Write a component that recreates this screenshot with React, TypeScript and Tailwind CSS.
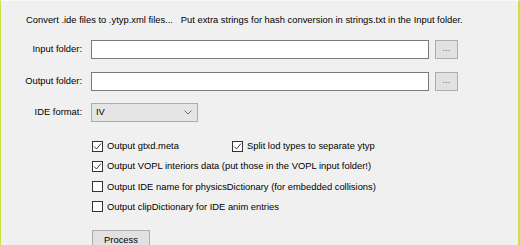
import React from "react";

const Check = ({ checked }: { checked?: boolean }) => (
  <span className="flex h-[11px] w-[11px] shrink-0 items-center justify-center border border-[#333333] bg-white">
    {checked && (
      <svg width="9" height="9" viewBox="0 0 9 9">
        <path d="M1 4.5 L3.5 7 L8 1.5" fill="none" stroke="#3a3a3a" strokeWidth="1" />
      </svg>
    )}
  </span>
);

const Option = ({ label, checked }: { label: string; checked?: boolean }) => (
  <label className="flex items-center gap-[4px] leading-[12px]">
    <Check checked={checked} />
    <span>{label}</span>
  </label>
);

const FolderRow = ({ label }: { label: string }) => (
  <div className="flex items-center">
    <span className="w-[81px] text-right">{label}</span>
    <div className="ml-[9px] h-[19px] w-[338px] border border-[#7a7a7a] bg-white" />
    <button className="ml-[6px] flex h-[19px] w-[23px] items-center justify-center border border-[#adadad] bg-[#e1e1e1] pb-[2px] text-[#666]">
      ...
    </button>
  </div>
);

export default function App() {
  return (
    <div
      className="flex h-[245px] w-[520px] flex-col overflow-hidden border-t border-r-2 border-l border-t-white border-dotted border-r-[#c8e43c] border-l-[#c8e43c] bg-[#f0f0f0] text-[9.4px] text-black"
      style={{ fontFamily: '"Liberation Sans", Arial, sans-serif', borderRightStyle: "solid", borderLeftStyle: "solid" }}
    >
      <p className="mt-[13px] pl-[25px] leading-[12px]">
        Convert .ide files to .ytyp.xml files...&nbsp;&nbsp;&nbsp;Put extra strings for hash conversion in strings.txt in the Input folder.
      </p>

      <div className="mt-[14px] flex flex-col gap-[13px]">
        <FolderRow label="Input folder:" />
        <FolderRow label="Output folder:" />
      </div>

      <div className="mt-[12px] flex items-center">
        <span className="w-[81px] text-right">IDE format:</span>
        <div className="ml-[9px] flex h-[19px] w-[107px] items-center justify-between border border-[#acacac] bg-[#e5e5e5] pl-[4px] pr-[5px]">
          <span>IV</span>
          <svg width="8" height="5" viewBox="0 0 8 5">
            <path d="M0.5 0.5 L4 4 L7.5 0.5" fill="none" stroke="#707070" strokeWidth="1" />
          </svg>
        </div>
      </div>

      <div className="mt-[18px] ml-[91px] flex flex-col gap-[8.3px]">
        <div className="flex">
          <div className="w-[140px]">
            <Option label="Output gtxd.meta" checked />
          </div>
          <Option label="Split lod types to separate ytyp" checked />
        </div>
        <Option label="Output VOPL interiors data (put those in the VOPL input folder!)" checked />
        <Option label="Output IDE name for physicsDictionary (for embedded collisions)" />
        <Option label="Output clipDictionary for IDE anim entries" />
      </div>

      <button className="mt-[17px] ml-[91px] flex h-[22px] w-[58px] shrink-0 items-start justify-center border border-[#adadad] bg-[#e1e1e1] pt-[3px] leading-[12px]">
        Process
      </button>
    </div>
  );
}
